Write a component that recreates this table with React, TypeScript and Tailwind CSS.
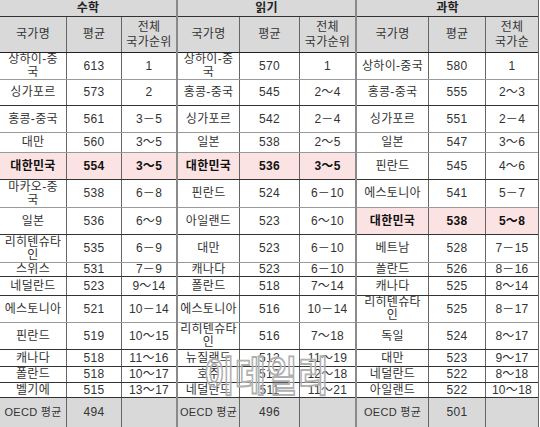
import React from 'react';

type Row = [string, string, string];

interface TableProps {
  title: string;
  widths: [string, string, string];
  rankHeader: string;
  rows: Row[];
  highlight: number;
  oecd: string;
  edge: string;
}

// shared spreadsheet row heights (data rows), then the OECD row
const rowHeights = [
  'h-[27px]', 'h-[26px]', 'h-[27px]', 'h-[20px]', 'h-[27px]', 'h-[28px]', 'h-[27px]', 'h-[28px]',
  'h-[14px]', 'h-[19px]', 'h-[27px]', 'h-[27px]', 'h-[17px]', 'h-[16px]', 'h-[15px]',
];

const rowLines = [
  'border-b-[#9a9a9a]', 'border-b-[#333]', 'border-b-[#9a9a9a]', 'border-b-[#999]', 'border-b-[#333]',
  'border-b-[#9a9a9a]', 'border-b-[#333]', 'border-b-[#9a9a9a]', 'border-b-[#333]', 'border-b-[#333]',
  'border-b-[#9a9a9a]', 'border-b-[#333]', 'border-b-[#333]', 'border-b-[#333]', 'border-b-[#333]',
];

const math: Row[] = [
  ['상하이-중\n국', '613', '1'],
  ['싱가포르', '573', '2'],
  ['홍콩-중국', '561', '3－5'],
  ['대만', '560', '3～5'],
  ['대한민국', '554', '3～5'],
  ['마카오-중\n국', '538', '6－8'],
  ['일본', '536', '6～9'],
  ['리히텐슈타\n인', '535', '6－9'],
  ['스위스', '531', '7－9'],
  ['네덜란드', '523', '9～14'],
  ['에스토니아', '521', '10－14'],
  ['핀란드', '519', '10～15'],
  ['캐나다', '518', '11～16'],
  ['폴란드', '518', '10～17'],
  ['벨기에', '515', '13～17'],
];

const reading: Row[] = [
  ['상하이-중\n국', '570', '1'],
  ['홍콩-중국', '545', '2～4'],
  ['싱가포르', '542', '2－4'],
  ['일본', '538', '2～5'],
  ['대한민국', '536', '3～5'],
  ['핀란드', '524', '6－10'],
  ['아일랜드', '523', '6～10'],
  ['대만', '523', '6－10'],
  ['캐나다', '523', '6－10'],
  ['폴란드', '518', '7～14'],
  ['에스토니아', '516', '10－14'],
  ['리히텐슈타\n인', '516', '7～18'],
  ['뉴질랜드', '512', '11～19'],
  ['호주', '512', '12～18'],
  ['네덜란드', '511', '11～21'],
];

const science: Row[] = [
  ['상하이-중국', '580', '1'],
  ['홍콩-중국', '555', '2～3'],
  ['싱가포르', '551', '2－4'],
  ['일본', '547', '3～6'],
  ['핀란드', '545', '4～6'],
  ['에스토니아', '541', '5－7'],
  ['대한민국', '538', '5～8'],
  ['베트남', '528', '7－15'],
  ['폴란드', '526', '8－16'],
  ['캐나다', '525', '8～14'],
  ['리히텐슈타\n인', '525', '8－17'],
  ['독일', '524', '8～17'],
  ['대만', '523', '9～17'],
  ['네덜란드', '522', '8～18'],
  ['아일랜드', '522', '10～18'],
];

const cell = 'flex shrink-0 items-center justify-center overflow-hidden text-center whitespace-pre-line leading-[13px]';

const ScoreTable: React.FC<TableProps> = ({ title, widths, rankHeader, rows, highlight, oecd, edge }) => {
  return (
    <div className={`flex h-full flex-col ${edge}`}>
      <div className="flex h-[17px] shrink-0 items-center justify-center border-b border-b-[#333] bg-[#d9d9d9] font-bold text-[#222]">
        {title}
      </div>
      <div className="flex h-[36px] shrink-0 border-b border-b-[#222] bg-[#d9d9d9]">
        <div className={`${cell} ${widths[0]} border-r border-r-[#666]`}>국가명</div>
        <div className={`${cell} ${widths[1]} border-r border-r-[#666]`}>평균</div>
        <div className={`${cell} ${widths[2]} leading-[15px]`}>{rankHeader}</div>
      </div>
      {rows.map((r, i) => {
        const hl = i === highlight;
        return (
          <div
            key={r[0] + i}
            className={`flex shrink-0 border-b ${rowHeights[i]} ${rowLines[i]} ${hl ? 'bg-[#fce3e3] font-bold text-[#111]' : 'bg-white'}`}
          >
            <div className={`${cell} ${widths[0]} border-r border-r-[#666]`}>{r[0]}</div>
            <div className={`${cell} ${widths[1]} border-r border-r-[#666]`}>{r[1]}</div>
            <div className={`${cell} ${widths[2]}`}>{r[2]}</div>
          </div>
        );
      })}
      <div className="flex flex-1 bg-[#d9d9d9]">
        <div className={`${cell} ${widths[0]} border-r border-r-[#666] text-[11px]`}>OECD 평균</div>
        <div className={`${cell} ${widths[1]} border-r border-r-[#666]`}>{oecd}</div>
        <div className={`${cell} ${widths[2]}`} />
      </div>
    </div>
  );
};

export default function App() {
  return (
    <div className="relative flex h-[427px] w-[540px] overflow-hidden bg-white font-['Liberation_Sans','Noto_Sans_CJK_KR',sans-serif] text-[12px] tracking-[0.3px] text-[#333]">
      <ScoreTable
        title="수학"
        widths={['w-[67px]', 'w-[55px]', 'w-[54px]']}
        rankHeader={'전체\n국가순위'}
        rows={math}
        highlight={4}
        oecd="494"
        edge="border-r-2 border-r-[#8a8a8a]"
      />
      <ScoreTable
        title="읽기"
        widths={['w-[62px]', 'w-[60px]', 'w-[55px]']}
        rankHeader={'전체\n국가순위'}
        rows={reading}
        highlight={4}
        oecd="496"
        edge="border-r-2 border-r-[#8a8a8a]"
      />
      <ScoreTable
        title="과학"
        widths={['w-[72px]', 'w-[57px]', 'w-[52px]']}
        rankHeader={'전체\n국가순'}
        rows={science}
        highlight={6}
        oecd="501"
        edge="border-r border-r-[#666]"
      />
      {/* watermark */}
      <div className="pointer-events-none absolute left-[204px] top-[356px] origin-top scale-y-[1.25] select-none text-[33px] leading-none font-bold tracking-[1px] text-white/30 [-webkit-text-stroke:1.5px_#b0b0b0]">
        이데일리
      </div>
    </div>
  );
}
